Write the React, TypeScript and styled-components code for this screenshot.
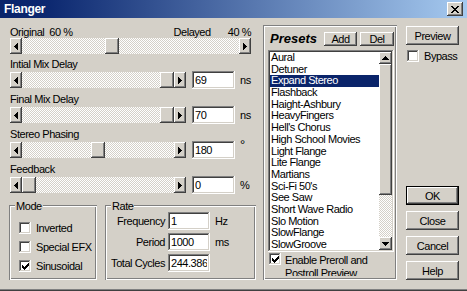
import React from "react";
import styled, { createGlobalStyle, css } from "styled-components";

const FONT = `"Liberation Sans", Arial, sans-serif`;

const GlobalStyle = createGlobalStyle`
  html, body { margin: 0; padding: 0; background: #d4d0c8; }
  body { font-family: ${FONT}; font-size: 11px; line-height: 12px; letter-spacing: -0.45px; color: #000; }
  *, *::before, *::after { box-sizing: border-box; }
`;

const raised = css`
  background: #d4d0c8;
  box-shadow: inset -1px -1px #404040, inset 1px 1px #ffffff, inset -2px -2px #808080, inset 2px 2px #d4d0c8;
`;
const sunken = css`
  box-shadow: inset -1px -1px #ffffff, inset 1px 1px #808080, inset -2px -2px #d4d0c8, inset 2px 2px #404040;
`;
const etched = css`
  box-shadow: inset 1px 1px #808080, inset -1px -1px #ffffff, inset 2px 2px #ffffff, inset -2px -2px #808080;
`;
const checker = css`
  background: repeating-conic-gradient(#ffffff 0% 25%, #d4d0c8 0% 50%) 0 0 / 2px 2px;
`;

const Window = styled.div`
  width: 467px;
  height: 291px;
  display: flex;
  flex-direction: column;
  background: #d4d0c8;
  overflow: hidden;
`;

const TitleBar = styled.div`
  flex: none;
  height: 18px;
  display: flex;
  align-items: center;
  padding: 0 4px;
  background: linear-gradient(90deg, #0a246a 0%, #0c2870 10%, #a6caf0 100%);
`;

const TitleText = styled.span`
  font-weight: bold;
  font-size: 12px;
  line-height: 18px;
  letter-spacing: -0.3px;
  color: #ffffff;
`;

const CloseButton = styled.div`
  margin-left: auto;
  width: 16px;
  height: 14px;
  ${raised};
  display: flex;
  align-items: center;
  justify-content: center;
`;

const Body = styled.div`
  flex: 1;
  display: flex;
  padding: 0 0 11px 9px;
  box-shadow: inset 0 -1px #404040, inset 0 -2px #808080;
`;

const LeftCol = styled.div`
  width: 248px;
  flex: none;
  display: flex;
  flex-direction: column;
  padding-top: 8px;
`;

const MixLabels = styled.div`
  display: flex;
  width: 241px;
  height: 12px;
  margin-left: 1px;
  white-space: nowrap;
`;

const LabelGroup = styled.div<{ $right?: boolean }>`
  display: flex;
  ${(p) => p.$right && "margin-left: auto;"}
`;

const Pct = styled.span<{ $gap: number }>`
  margin-left: ${(p) => p.$gap}px;
`;

const FieldLabel = styled.div<{ $gap: number }>`
  height: 12px;
  margin: ${(p) => p.$gap}px 0 0 1px;
  white-space: nowrap;
`;

const ParamRow = styled.div`
  display: flex;
  align-items: center;
  height: 20px;
  margin-left: 1px;
`;

const TextField = styled.input<{ $w: number }>`
  width: ${(p) => p.$w}px;
  height: 18px;
  flex: none;
  border: none;
  outline: none;
  margin: 0;
  padding: 0 3px;
  background: #ffffff;
  ${sunken};
  font: inherit;
  font-size: 11px;
  letter-spacing: -0.45px;
  color: #000;
`;

const Unit = styled.span<{ $sup?: boolean }>`
  margin-left: 5px;
  white-space: nowrap;
  ${(p) =>
    p.$sup &&
    css`
      align-self: flex-start;
      font-size: 13px;
      line-height: 10px;
    `}
`;

const ScrollTrack = styled.div<{ $w: number }>`
  width: ${(p) => p.$w}px;
  height: 16px;
  flex: none;
  display: flex;
  ${checker};
`;

const ArrowButton = styled.div<{ $w: number; $h: number }>`
  width: ${(p) => p.$w}px;
  height: ${(p) => p.$h}px;
  flex: none;
  ${raised};
  display: flex;
  align-items: center;
  justify-content: center;
`;

const Lane = styled.div`
  flex: 1;
  min-width: 0;
  display: flex;
`;

const Thumb = styled.div<{ $w: number; $h: number }>`
  width: ${(p) => p.$w}px;
  height: ${(p) => p.$h}px;
  flex: none;
  ${raised};
`;

const GroupRow = styled.div`
  display: flex;
  gap: 8px;
  margin-top: 10px;
  height: 75px;
`;

const GroupBox = styled.div<{ $w: number }>`
  position: relative;
  width: ${(p) => p.$w}px;
  height: 75px;
  flex: none;
  ${etched};
`;

const Legend = styled.span`
  position: absolute;
  top: -5px;
  left: 6px;
  padding: 0 1px;
  line-height: 12px;
  background: #d4d0c8;
`;

const CheckList = styled.div`
  display: flex;
  flex-direction: column;
  gap: 7px;
  padding: 17px 0 0 10px;
`;

const CheckRow = styled.label`
  display: flex;
  align-items: center;
  height: 12px;
  white-space: nowrap;
`;

const CheckBox = styled.span`
  width: 12px;
  height: 12px;
  flex: none;
  background: #ffffff;
  ${sunken};
  display: flex;
  align-items: center;
  justify-content: center;
`;

const CheckText = styled.span`
  margin-left: 5px;
`;

const RateGrid = styled.div`
  display: grid;
  grid-template-columns: 58px 42px auto;
  grid-auto-rows: 18px;
  column-gap: 3px;
  row-gap: 3px;
  padding: 7px 0 0 2px;
  align-items: center;
`;

const RateLabel = styled.span`
  text-align: right;
  white-space: nowrap;
`;

const RateUnit = styled.span`
  margin-left: 2px;
`;

const PresetsPanel = styled.div`
  width: 134px;
  height: 255px;
  flex: none;
  margin: 7px 0 0 6px;
  ${etched};
  display: flex;
  flex-direction: column;
  padding: 7px 3px 0 5px;
`;

const PresetsHeader = styled.div`
  display: flex;
  align-items: center;
  height: 14px;
  gap: 3px;
`;

const PresetsTitle = styled.span`
  font-weight: bold;
  font-style: italic;
  font-size: 13px;
  letter-spacing: 0;
  margin: 0 auto 0 2px;
`;

const SmallButton = styled.button<{ $w: number }>`
  width: ${(p) => p.$w}px;
  height: 14px;
  border: none;
  padding: 0;
  margin: 0;
  ${raised};
  font: inherit;
  font-size: 11px;
  line-height: 12px;
  letter-spacing: -0.45px;
  color: #000;
`;

const ListBox = styled.div`
  margin-top: 4px;
  width: 126px;
  height: 202px;
  background: #ffffff;
  ${sunken};
  padding: 2px;
  display: flex;
`;

const ListItems = styled.ul`
  flex: 1;
  min-width: 0;
  margin: 0;
  padding: 0;
  list-style: none;
  overflow: hidden;
`;

const ListItem = styled.li<{ $selected?: boolean }>`
  height: 11.7px;
  line-height: 11.7px;
  padding-left: 1px;
  white-space: nowrap;
  ${(p) =>
    p.$selected &&
    css`
      background: #0a246a;
      color: #ffffff;
    `}
`;

const VScroll = styled.div`
  width: 13px;
  flex: none;
  display: flex;
  flex-direction: column;
`;

const VTrack = styled.div`
  flex: 1;
  ${checker};
`;

const PrerollRow = styled.label`
  display: flex;
  align-items: flex-start;
  margin-top: 1px;
  padding-left: 1px;
  height: 23px;
  overflow: hidden;
`;

const PrerollText = styled.span`
  margin-left: 4px;
  line-height: 12.5px;
  margin-top: 1px;
`;

const RightCol = styled.div`
  width: 53px;
  flex: none;
  margin-left: 9px;
  display: flex;
  flex-direction: column;
  padding-top: 8px;
`;

const PushButton = styled.button<{ $default?: boolean }>`
  width: 53px;
  height: 19px;
  flex: none;
  margin: 0;
  padding: 0;
  border: none;
  ${raised};
  font: inherit;
  font-size: 11px;
  letter-spacing: -0.45px;
  color: #000;
  ${(p) =>
    p.$default &&
    css`
      border: 1px solid #000000;
    `}
`;

const BypassRow = styled.label`
  display: flex;
  align-items: center;
  height: 12px;
  margin-top: 5px;
  padding-left: 1px;
`;

const DialogButtons = styled.div`
  margin-top: auto;
  display: flex;
  flex-direction: column;
  gap: 6px;
`;

type Dir = "left" | "right" | "up" | "down";
const ARROWS: Record<Dir, string> = {
  left: "M0 3h1v1H0zM1 2h1v3H1zM2 1h1v5H2zM3 0h1v7H3z",
  right: "M0 0h1v7H0zM1 1h1v5H1zM2 2h1v3H2zM3 3h1v1H3z",
  up: "M3 0h1v1H3zM2 1h3v1H2zM1 2h5v1H1zM0 3h7v1H0z",
  down: "M0 0h7v1H0zM1 1h5v1H1zM2 2h3v1H2zM3 3h1v1H3z",
};

const Arrow = ({ dir }: { dir: Dir }) => {
  const horiz = dir === "left" || dir === "right";
  const w = horiz ? 4 : 7;
  const h = horiz ? 7 : 4;
  return (
    <svg width={w} height={h} viewBox={`0 0 ${w} ${h}`} shapeRendering="crispEdges">
      <path d={ARROWS[dir]} fill="#000" />
    </svg>
  );
};

const CheckMark = () => (
  <svg width="7" height="7" viewBox="0 0 7 7" shapeRendering="crispEdges">
    <path
      d="M6 0h1v1H6zM5 1h2v1H5zM0 2h1v1H0zM4 2h3v1H4zM0 3h2v1H0zM3 3h3v1H3zM0 4h5v1H0zM1 5h3v1H1zM2 6h1v1H2z"
      fill="#000"
    />
  </svg>
);

const CloseGlyph = () => (
  <svg width="8" height="7" viewBox="0 0 8 7" shapeRendering="crispEdges">
    <path
      d="M0 0h2v1H0zM6 0h2v1H6zM1 1h2v1H1zM5 1h2v1H5zM2 2h4v1H2zM3 3h2v1H3zM2 4h4v1H2zM1 5h2v1H1zM5 5h2v1H5zM0 6h2v1H0zM6 6h2v1H6z"
      fill="#000"
    />
  </svg>
);

const HSlider = ({ width, value }: { width: number; value: number }) => {
  const lane = width - 24;
  const offset = Math.round((lane - 14) * value);
  return (
    <ScrollTrack $w={width}>
      <ArrowButton $w={12} $h={16}>
        <Arrow dir="left" />
      </ArrowButton>
      <Lane>
        <Thumb $w={14} $h={16} style={{ marginLeft: offset }} />
      </Lane>
      <ArrowButton $w={12} $h={16}>
        <Arrow dir="right" />
      </ArrowButton>
    </ScrollTrack>
  );
};

const Check = ({ checked, label }: { checked?: boolean; label: string }) => (
  <CheckRow>
    <CheckBox>{checked && <CheckMark />}</CheckBox>
    <CheckText>{label}</CheckText>
  </CheckRow>
);

const params = [
  { label: "Intial Mix Delay", value: "69", unit: "ns", pos: 1, gap: 4 },
  { label: "Final Mix Delay", value: "70", unit: "ns", pos: 1, gap: 3 },
  { label: "Stereo Phasing", value: "180", unit: "°", pos: 0.5, gap: 3 },
  { label: "Feedback", value: "0", unit: "%", pos: 0, gap: 3 },
];

const presets = [
  "Aural",
  "Detuner",
  "Expand Stereo",
  "Flashback",
  "Haight-Ashbury",
  "HeavyFingers",
  "Hell's Chorus",
  "High School Movies",
  "Light Flange",
  "Lite Flange",
  "Martians",
  "Sci-Fi 50's",
  "See Saw",
  "Short Wave Radio",
  "Slo Motion",
  "SlowFlange",
  "SlowGroove",
];

export default function App() {
  return (
    <>
      <GlobalStyle />
      <Window>
        <TitleBar>
          <TitleText>Flanger</TitleText>
          <CloseButton>
            <CloseGlyph />
          </CloseButton>
        </TitleBar>
        <Body>
          <LeftCol>
            <MixLabels>
              <LabelGroup>
                Original
                <Pct $gap={5}>60 %</Pct>
              </LabelGroup>
              <LabelGroup $right>
                Delayed
                <Pct $gap={17}>40 %</Pct>
              </LabelGroup>
            </MixLabels>
            <ParamRow style={{ height: 16 }}>
              <HSlider width={241} value={0.41} />
            </ParamRow>
            {params.map((p) => (
              <React.Fragment key={p.label}>
                <FieldLabel $gap={p.gap}>{p.label}</FieldLabel>
                <ParamRow>
                  <HSlider width={176} value={p.pos} />
                  <TextField $w={43} style={{ marginLeft: 6 }} defaultValue={p.value} readOnly />
                  <Unit $sup={p.unit === "°"}>{p.unit}</Unit>
                </ParamRow>
              </React.Fragment>
            ))}
            <GroupRow>
              <GroupBox $w={88}>
                <Legend>Mode</Legend>
                <CheckList>
                  <Check label="Inverted" />
                  <Check label="Special EFX" />
                  <Check label="Sinusoidal" checked />
                </CheckList>
              </GroupBox>
              <GroupBox $w={151}>
                <Legend>Rate</Legend>
                <RateGrid>
                  <RateLabel>Frequency</RateLabel>
                  <TextField $w={42} defaultValue="1" readOnly />
                  <RateUnit>Hz</RateUnit>
                  <RateLabel>Period</RateLabel>
                  <TextField $w={42} defaultValue="1000" readOnly />
                  <RateUnit>ms</RateUnit>
                  <RateLabel>Total Cycles</RateLabel>
                  <TextField $w={42} defaultValue="244.386" readOnly />
                  <span />
                </RateGrid>
              </GroupBox>
            </GroupRow>
          </LeftCol>

          <PresetsPanel>
            <PresetsHeader>
              <PresetsTitle>Presets</PresetsTitle>
              <SmallButton $w={33}>Add</SmallButton>
              <SmallButton $w={34}>Del</SmallButton>
            </PresetsHeader>
            <ListBox>
              <ListItems>
                {presets.map((name) => (
                  <ListItem key={name} $selected={name === "Expand Stereo"}>
                    {name}
                  </ListItem>
                ))}
              </ListItems>
              <VScroll>
                <ArrowButton $w={13} $h={12}>
                  <Arrow dir="up" />
                </ArrowButton>
                <Thumb $w={13} $h={131} />
                <VTrack />
                <ArrowButton $w={13} $h={13}>
                  <Arrow dir="down" />
                </ArrowButton>
              </VScroll>
            </ListBox>
            <PrerollRow>
              <CheckBox>
                <CheckMark />
              </CheckBox>
              <PrerollText>
                Enable Preroll and
                <br />
                Postroll Preview
              </PrerollText>
            </PrerollRow>
          </PresetsPanel>

          <RightCol>
            <PushButton>Preview</PushButton>
            <BypassRow>
              <CheckBox />
              <CheckText>Bypass</CheckText>
            </BypassRow>
            <DialogButtons>
              <PushButton $default>OK</PushButton>
              <PushButton>Close</PushButton>
              <PushButton>Cancel</PushButton>
              <PushButton>Help</PushButton>
            </DialogButtons>
          </RightCol>
        </Body>
      </Window>
    </>
  );
}
